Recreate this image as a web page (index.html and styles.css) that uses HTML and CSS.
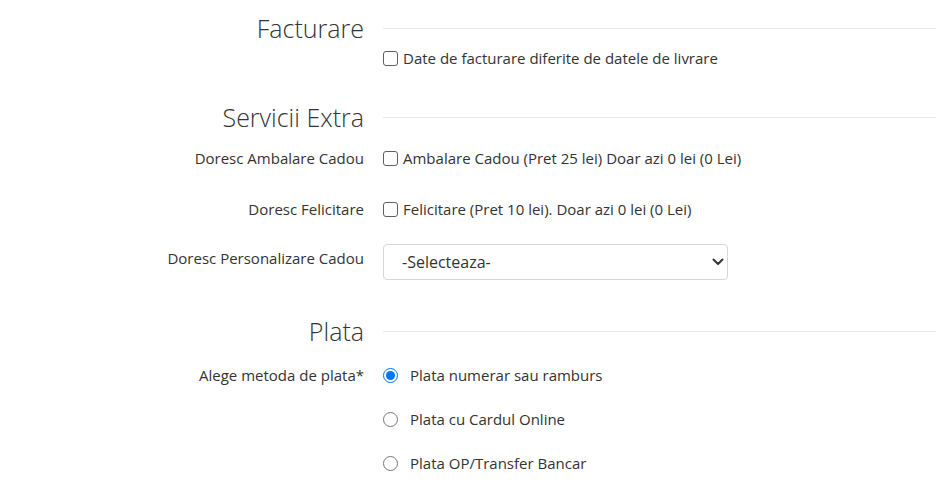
FILE: index.html
```html
<!DOCTYPE html>
<html lang="ro">
<head>
<meta charset="utf-8">
<title>Checkout</title>
<link rel="stylesheet" href="styles.css">
</head>
<body>
<form class="checkout">
  <section class="block block-billing">
    <div class="head">
      <h2 class="head-title">Facturare</h2>
      <div class="head-line"></div>
    </div>
    <div class="row row-first">
      <div class="label"></div>
      <label class="check"><input type="checkbox" class="cb"><span>Date de facturare diferite de datele de livrare</span></label>
    </div>
  </section>

  <section class="block block-extra">
    <div class="head">
      <h2 class="head-title">Servicii Extra</h2>
      <div class="head-line"></div>
    </div>
    <div class="row row-gift">
      <div class="label">Doresc Ambalare Cadou</div>
      <label class="check"><input type="checkbox" class="cb"><span>Ambalare Cadou (Pret 25 lei) Doar azi 0 lei (0 Lei)</span></label>
    </div>
    <div class="row row-card">
      <div class="label">Doresc Felicitare</div>
      <label class="check"><input type="checkbox" class="cb"><span>Felicitare (Pret 10 lei). Doar azi 0 lei (0 Lei)</span></label>
    </div>
    <div class="row row-select">
      <div class="label label-select">Doresc Personalizare Cadou</div>
      <div class="control">
        <select class="select">
          <option>-Selecteaza-</option>
        </select>
        <svg class="chev" width="12" height="8" viewBox="0 0 12 8" aria-hidden="true"><path d="M1.5 1.5 L6 6 L10.5 1.5" fill="none" stroke="#343434" stroke-width="2" stroke-linecap="round" stroke-linejoin="round"/></svg>
      </div>
    </div>
  </section>

  <section class="block block-pay">
    <div class="head">
      <h2 class="head-title">Plata</h2>
      <div class="head-line"></div>
    </div>
    <div class="row row-pay">
      <div class="label">Alege metoda de plata*</div>
      <div class="radios">
        <label class="radio"><input type="radio" name="pay" class="rb" checked><span>Plata numerar sau ramburs</span></label>
        <label class="radio"><input type="radio" name="pay" class="rb"><span>Plata cu Cardul Online</span></label>
        <label class="radio"><input type="radio" name="pay" class="rb"><span>Plata OP/Transfer Bancar</span></label>
      </div>
    </div>
  </section>
</form>
</body>
</html>
```

FILE: styles.css
```css
html, body {
  margin: 0;
  padding: 0;
  background: #fff;
}
body {
  font-family: "Open Sans", "Liberation Sans", sans-serif;
  font-size: 15px;
  line-height: 20px;
  color: #333;
  overflow: hidden;
}
.checkout {
  display: flex;
  flex-direction: column;
  padding-top: 8px;
}
.head {
  display: grid;
  grid-template-columns: 364px 1fr;
  column-gap: 19px;
  align-items: center;
  height: 40px;
}
.head-title {
  margin: 0;
  text-align: right;
  font-size: 25px;
  line-height: 40px;
  font-weight: 300;
  color: #333;
  white-space: nowrap;
}
.head-line {
  height: 1px;
  background: #e7e7e7;
}
.block-extra { margin-top: 29px; }
.block-pay { margin-top: 31px; }

.row {
  display: grid;
  grid-template-columns: 364px 1fr;
  column-gap: 19px;
  align-items: start;
}
.label {
  text-align: right;
  white-space: nowrap;
  color: #333;
}
.row-gift { margin-top: 11px; }
.row-card { margin-top: 31px; }
.row-select { margin-top: 25px; }
.row-pay { margin-top: 14px; }
.label-select { padding-top: 4px; }

.check {
  display: flex;
  align-items: center;
  gap: 5px;
  white-space: nowrap;
}
.cb {
  appearance: none;
  -webkit-appearance: none;
  box-sizing: border-box;
  margin: 0;
  width: 15px;
  height: 15px;
  border: 1px solid #5f5f5f;
  border-radius: 3px;
  background: #fff;
  flex: none;
}
.control {
  position: relative;
  display: flex;
  width: 345px;
}
.select {
  appearance: none;
  -webkit-appearance: none;
  box-sizing: border-box;
  width: 345px;
  height: 36px;
  margin: 0;
  padding: 0 36px 0 18px;
  border: 1px solid #d6d6d6;
  border-radius: 4px;
  background: #fff;
  font-family: "Open Sans", "Liberation Sans", sans-serif;
  font-size: 16px;
  color: #333;
}
.chev {
  position: absolute;
  left: 329px;
  top: 14px;
  pointer-events: none;
}
.radios {
  display: flex;
  flex-direction: column;
  gap: 24px;
}
.radio {
  display: flex;
  align-items: center;
  gap: 12px;
  font-size: 15px;
  white-space: nowrap;
}
.rb {
  margin: 0;
  width: 15px;
  height: 15px;
}
```
